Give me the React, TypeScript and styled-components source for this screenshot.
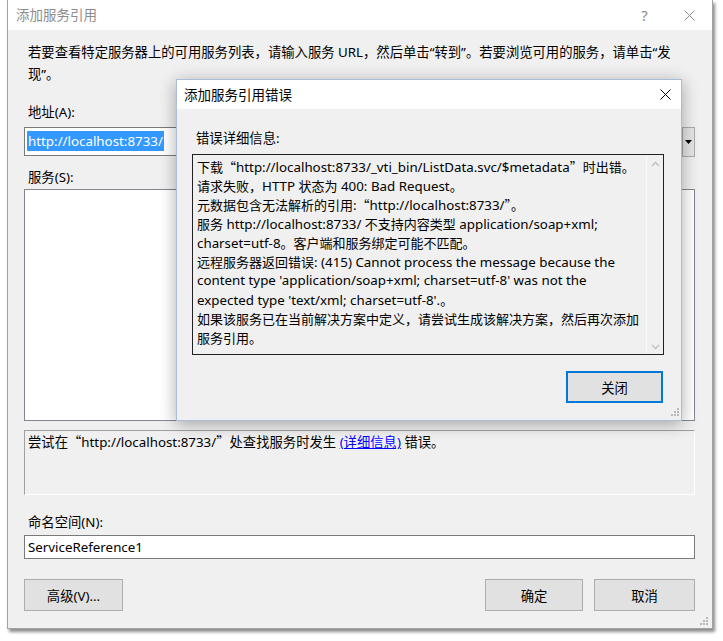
import React from "react";
import styled, { createGlobalStyle } from "styled-components";

const FONT = `"Noto Sans", "Noto Sans CJK SC", sans-serif`;

const Global = createGlobalStyle`
  html, body { margin: 0; padding: 0; background: #fff; }
  body { font-family: ${FONT}; font-size: 13.33px; color: #000; }
  * { box-sizing: border-box; }
`;

const Page = styled.div`
  width: 723px;
  height: 641px;
  position: relative;
  overflow: hidden;
  background: #fff;
`;

const Window = styled.div`
  position: relative;
  margin-left: 7px;
  width: 706px;
  height: 629px;
  border: 1px solid #a3a3a3;
  border-top: none;
  background: #f0f0f0;
  box-shadow: 2px 3px 3px rgba(0, 0, 0, 0.45);
  display: flex;
  flex-direction: column;
`;

const TitleBar = styled.div<{ $inactive?: boolean; $pl: number; $h: number }>`
  height: ${(p) => p.$h}px;
  flex: none;
  background: #fff;
  display: flex;
  align-items: center;
  padding-left: ${(p) => p.$pl}px;
  font-size: 13.5px;
  color: ${(p) => (p.$inactive ? "#8c8c8c" : "#000")};
`;

const TitleText = styled.div`
  flex: 1;
  line-height: 20px;
`;

const TitleButton = styled.div<{ $w: number }>`
  width: ${(p) => p.$w}px;
  height: 100%;
  display: flex;
  align-items: center;
  justify-content: center;
  color: #8c8c8c;
  font-size: 15px;
`;

const Content = styled.div`
  flex: 1;
  display: flex;
  flex-direction: column;
  padding: 11px 17px 0 16px;
`;

const Instruction = styled.div`
  line-height: 22px;
  white-space: nowrap;
  padding-left: 4px;
`;

const Label = styled.div<{ $mt: number }>`
  margin-top: ${(p) => p.$mt}px;
  line-height: 20px;
  padding-left: 4px;
`;

const Combo = styled.div`
  margin-top: 5px;
  height: 29px;
  background: #fff;
  border: 1px solid #7a7a7a;
  display: flex;
`;

const ComboText = styled.div`
  flex: 1;
  padding: 3px 2px;
  line-height: 20px;
`;

const Selection = styled.span`
  display: inline-block;
  background: #3399ff;
  color: #fff;
  padding: 0 1px;
`;

const DropButton = styled.div`
  width: 13px;
  margin: -1px -1px -2px 0;
  background: #e5e5e5;
  border: 1px solid #acacac;
  display: flex;
  align-items: center;
  justify-content: center;
`;

const ListBox = styled.div`
  margin-top: 2px;
  height: 232px;
  background: #fff;
  border: 1px solid #828790;
`;

const StatusBox = styled.div`
  margin-top: 9px;
  height: 65px;
  border-top: 1px solid #a0a0a0;
  border-left: 1px solid #a0a0a0;
  border-right: 1px solid #fff;
  border-bottom: 1px solid #fff;
  padding: 1px 3px;
  line-height: 20px;
  white-space: nowrap;
`;

const WideQuote = styled.span`
  font-family: "Noto Sans CJK SC", sans-serif;
`;

const Link = styled.span`
  color: #0000ff;
  text-decoration: underline;
`;

const TextInput = styled.div`
  margin-top: 3px;
  height: 24px;
  background: #fff;
  border: 1px solid #7a7a7a;
  padding: 1px 3px;
  line-height: 20px;
`;

const ButtonRow = styled.div`
  margin-top: 20px;
  display: flex;
  justify-content: space-between;
`;

const ButtonGroup = styled.div`
  display: flex;
  gap: 11px;
`;

const Button = styled.div<{ $w: number; $primary?: boolean }>`
  width: ${(p) => p.$w}px;
  height: 32px;
  background: #e1e1e1;
  border: ${(p) => (p.$primary ? "2px solid #0078d7" : "1px solid #adadad")};
  display: flex;
  align-items: center;
  justify-content: center;
  font-size: 13.33px;
`;

const Grip = styled.svg<{ $r: number; $b: number }>`
  position: absolute;
  right: ${(p) => p.$r}px;
  bottom: ${(p) => p.$b}px;
`;

/* ---------- Error dialog ---------- */

const Dialog = styled.div`
  position: absolute;
  left: 168px;
  top: 79px;
  width: 506px;
  height: 342px;
  border: 1px solid #a9bfd6;
  background: #f0f0f0;
  box-shadow: 0 3px 16px rgba(0, 0, 0, 0.33);
  display: flex;
  flex-direction: column;
`;

const DialogBody = styled.div`
  flex: 1;
  display: flex;
  flex-direction: column;
  padding: 19px 17px 0 15px;
`;

const DetailBox = styled.div`
  margin-top: 6px;
  height: 201px;
  border: 1px solid #202020;
  background: #f0f0f0;
  display: flex;
`;

const DetailText = styled.div`
  flex: 1;
  padding: 2px 0 0 4px;
  line-height: 19px;
  white-space: nowrap;
  overflow: hidden;
`;

const Line = styled.div`
  height: 19px;
`;

const Cjk = styled.span`
  font-family: "Noto Sans CJK SC", sans-serif;
  font-size: 13px;
`;

const ScrollBar = styled.div`
  width: 17px;
  border-left: 1px solid #f8f8f8;
  background: #f0f0f0;
  display: flex;
  flex-direction: column;
  justify-content: space-between;
  align-items: center;
  padding: 6px 0 4px;
`;

const DialogFooter = styled.div`
  margin-top: 16px;
  display: flex;
  justify-content: flex-end;
  padding-right: 1px;
`;

const XIcon = ({ color, size }: { color: string; size: number }) => (
  <svg width={size} height={size} viewBox={`0 0 ${size} ${size}`}>
    <path
      d={`M0.5 0.5 L${size - 0.5} ${size - 0.5} M${size - 0.5} 0.5 L0.5 ${size - 0.5}`}
      stroke={color}
      strokeWidth="1"
      fill="none"
    />
  </svg>
);

const Chevron = ({ up }: { up?: boolean }) => (
  <svg width="9" height="6" viewBox="0 0 9 6">
    <path d={up ? "M1 5 L4.5 1.5 L8 5" : "M1 1 L4.5 4.5 L8 1"} stroke="#c4c4c4" strokeWidth="1.6" fill="none" />
  </svg>
);

const GripDots = () => (
  <>
    {[
      [6, 0],
      [3, 3],
      [6, 3],
      [0, 6],
      [3, 6],
      [6, 6],
    ].map(([x, y], i) => (
      <rect key={i} x={x} y={y} width="2" height="2" fill="#b8b8b8" />
    ))}
  </>
);

const MixedText = ({ text }: { text: string }) => {
  const parts = text.split(/([\u201c\u201d\u3000-\u303f\u4e00-\u9fff\uff00-\uffef]+)/);
  return (
    <>
      {parts.map((p, i) =>
        i % 2 === 1 ? <Cjk key={i}>{p}</Cjk> : <React.Fragment key={i}>{p}</React.Fragment>
      )}
    </>
  );
};

const detailLines = [
  "下载“http://localhost:8733/_vti_bin/ListData.svc/$metadata”时出错。",
  "请求失败，HTTP 状态为 400:  Bad Request。",
  "元数据包含无法解析的引用:“http://localhost:8733/”。",
  "服务 http://localhost:8733/ 不支持内容类型 application/soap+xml;",
  "charset=utf-8。客户端和服务绑定可能不匹配。",
  "远程服务器返回错误: (415) Cannot process the message because the",
  "content type 'application/soap+xml; charset=utf-8' was not the",
  "expected type 'text/xml; charset=utf-8'.。",
  "如果该服务已在当前解决方案中定义，请尝试生成该解决方案，然后再次添加",
  "服务引用。",
];

export default function App() {
  return (
    <Page>
      <Global />
      <Window>
        <TitleBar $inactive $pl={8} $h={30}>
          <TitleText>添加服务引用</TitleText>
          <TitleButton $w={45}>?</TitleButton>
          <TitleButton $w={45}>
            <XIcon color="#8c8c8c" size={11} />
          </TitleButton>
        </TitleBar>
        <Content>
          <Instruction>
            若要查看特定服务器上的可用服务列表，请输入服务 URL，然后单击“转到”。若要浏览可用的服务，请单击“发
            <br />
            现”。
          </Instruction>
          <Label $mt={17}>地址(A):</Label>
          <Combo>
            <ComboText>
              <Selection>http://localhost:8733/</Selection>
            </ComboText>
            <DropButton>
              <svg width="7" height="4" viewBox="0 0 7 4">
                <path d="M0 0 H7 L3.5 4 Z" fill="#000" />
              </svg>
            </DropButton>
          </Combo>
          <Label $mt={11}>服务(S):</Label>
          <ListBox />
          <StatusBox>
            尝试在<WideQuote>“</WideQuote>http://localhost:8733/<WideQuote>”</WideQuote>处查找服务时发生{" "}
            <Link>(详细信息)</Link> 错误。
          </StatusBox>
          <Label $mt={17}>命名空间(N):</Label>
          <TextInput>ServiceReference1</TextInput>
          <ButtonRow>
            <Button $w={99}>高级(V)...</Button>
            <ButtonGroup>
              <Button $w={98}>确定</Button>
              <Button $w={101}>取消</Button>
            </ButtonGroup>
          </ButtonRow>
        </Content>
        <Grip $r={4} $b={3} width="8" height="8" viewBox="0 0 8 8">
          <GripDots />
        </Grip>

        <Dialog>
          <TitleBar $pl={7} $h={29}>
            <TitleText>添加服务引用错误</TitleText>
            <TitleButton $w={32}>
              <XIcon color="#000" size={11} />
            </TitleButton>
          </TitleBar>
          <DialogBody>
            <Label $mt={0}>错误详细信息:</Label>
            <DetailBox>
              <DetailText>
                {detailLines.map((l, i) => (
                  <Line key={i}>
                    <MixedText text={l} />
                  </Line>
                ))}
              </DetailText>
              <ScrollBar>
                <Chevron up />
                <Chevron />
              </ScrollBar>
            </DetailBox>
            <DialogFooter>
              <Button $w={97} $primary>
                关闭
              </Button>
            </DialogFooter>
          </DialogBody>
          <Grip $r={2} $b={4} width="8" height="8" viewBox="0 0 8 8">
            <GripDots />
          </Grip>
        </Dialog>
      </Window>
    </Page>
  );
}
